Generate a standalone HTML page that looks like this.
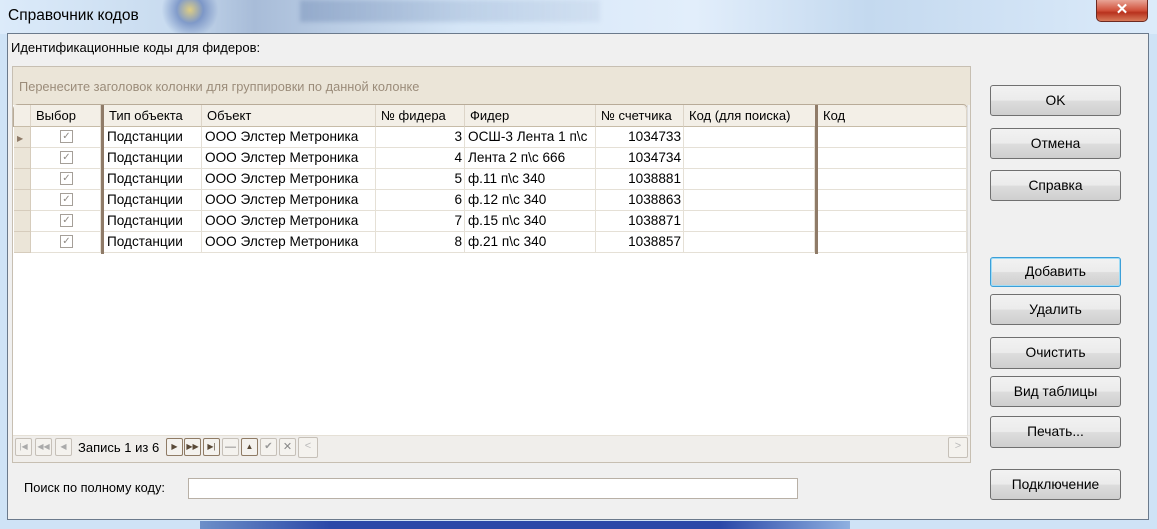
<!DOCTYPE html>
<html><head><meta charset="utf-8"><style>
*{box-sizing:border-box;margin:0;padding:0}
body{width:1157px;height:529px;overflow:hidden;position:relative;font-family:"Liberation Sans",sans-serif;font-size:12px;color:#000;background:#cfe3f6}
.a{position:absolute}
.title{left:0;top:0;width:1157px;height:34px;background:linear-gradient(90deg,#dcebfa 0%,#c8dbef 15%,#a8bcd8 22%,#d5e6f7 40%,#e2eefb 60%,#c4d9ef 75%,#dcebfa 100%)}
.client{left:7px;top:33px;width:1142px;height:487px;background:#f0f0f0;border:1px solid #6b7a8c}
.btn{position:absolute;left:990px;width:131px;border:1px solid #707070;border-radius:3px;background:linear-gradient(#f2f2f2 0%,#ebebeb 50%,#dddddd 51%,#cfcfcf 100%);text-align:center;font-size:13.8px}
.hd{position:absolute;top:105px;height:22px;line-height:21px;padding-left:5px;background:#f3efe7;border-right:1px solid #ddd5c8;border-bottom:1px solid #c7bca8;color:#000;font-size:13px}
.cell{position:absolute;height:21px;line-height:20px;border-right:1px solid #e5e0d6;border-bottom:1px solid #e5e0d6;padding:0 3px;font-size:13.6px;white-space:nowrap;overflow:hidden}
.r{text-align:right}
.cb{position:absolute;width:13px;height:13px;border:1px solid #a59f98;background:#fff}
.nb{position:absolute;top:438px;width:17px;height:18px;border:1px solid #c6c0b8;border-radius:2px;background:#f4f2ee;font-size:8px;line-height:16px;text-align:center;color:#aaa}
.nb.on{border-color:#8f7b65;color:#5a4a38}
</style></head><body>
<div class="a title"></div>
<div class="a" style="left:160px;top:0;width:60px;height:33px;background:radial-gradient(circle at 50% 30%,rgba(240,200,64,.6) 0,rgba(62,95,168,.5) 35%,rgba(200,220,240,0) 75%)"></div>
<div class="a" style="left:300px;top:0px;width:300px;height:22px;background:linear-gradient(90deg,rgba(80,110,160,.3),rgba(80,110,160,.08));filter:blur(2px)"></div>
<div class="a" style="left:8px;top:7px;font-size:15.5px;color:#000">Справочник кодов</div>
<div class="a" style="left:1096px;top:0;width:52px;height:22px;border:1px solid #6d2a22;border-top:none;border-radius:0 0 5px 5px;background:linear-gradient(#e8a496 0%,#d0503a 50%,#b8321e 60%,#d87a5a 100%);color:#fff;text-align:center;font-weight:bold;font-size:15px;line-height:20px">✕</div>
<div class="a client"></div>
<div class="a" style="left:11px;top:40px;font-size:13px">Идентификационные коды для фидеров:</div>
<div class="a" style="left:12px;top:66px;width:959px;height:397px;border:1px solid #c7bfb2;background:#fff"></div>
<div class="a" style="left:13px;top:67px;width:957px;height:38px;background:#ebe5d8"></div>
<div class="a" style="left:19px;top:79px;color:#9b8c7a;font-size:12.8px">Перенесите заголовок колонки для группировки по данной колонке</div>
<div class="a" style="left:13px;top:104px;width:955px;height:23px;border:1px solid #b8ab98;border-bottom:none;border-radius:5px 5px 0 0;background:#f3efe7"></div>
<div class="hd" style="left:14px;width:17px"></div>
<div class="hd" style="left:31px;width:70px">Выбор</div>
<div class="a" style="left:101px;top:105px;width:3px;height:149px;background:#8f7b68"></div>
<div class="hd" style="left:104px;width:98px">Тип объекта</div>
<div class="hd" style="left:202px;width:174px">Объект</div>
<div class="hd" style="left:376px;width:89px">№ фидера</div>
<div class="hd" style="left:465px;width:131px">Фидер</div>
<div class="hd" style="left:596px;width:88px">№ счетчика</div>
<div class="hd" style="left:684px;width:132px">Код (для поиска)</div>
<div class="a" style="left:815px;top:105px;width:3px;height:149px;background:#8f7b68"></div>
<div class="hd" style="left:818px;width:149px;border-radius:0 5px 0 0">Код</div>
<div id="rows"></div>
<script>
var d=[["3","ОСШ-3 Лента 1 п\\с","1034733"],["4","Лента 2 п\\с 666","1034734"],["5","ф.11 п\\с 340","1038881"],["6","ф.12 п\\с 340","1038863"],["7","ф.15 п\\с 340","1038871"],["8","ф.21 п\\с 340","1038857"]];
var h="";
d.forEach(function(r,i){var y=127+i*21;
h+='<div class="cell" style="left:14px;top:'+y+'px;width:17px;background:#ebe5d8;border-color:#d6ccbc">'+(i==0?'<span style="color:#8f7b68;font-size:8px">&#9654;</span>':'')+'</div>';
h+='<div class="cell" style="left:31px;top:'+y+'px;width:70px"></div><div class="cb" style="left:60px;top:'+(y+3)+'px;color:#8f8a84;font-size:10px;line-height:11px;text-align:center">✓</div>';
h+='<div class="cell" style="left:104px;top:'+y+'px;width:98px">Подстанции</div>';
h+='<div class="cell" style="left:202px;top:'+y+'px;width:174px">ООО Элстер Метроника</div>';
h+='<div class="cell r" style="left:376px;top:'+y+'px;width:89px;padding-right:2px">'+r[0]+'</div>';
h+='<div class="cell" style="left:465px;top:'+y+'px;width:131px;padding-left:3px">'+r[1]+'</div>';
h+='<div class="cell r" style="left:596px;top:'+y+'px;width:88px;padding-right:2px">'+r[2]+'</div>';
h+='<div class="cell" style="left:684px;top:'+y+'px;width:131px"></div>';
h+='<div class="cell" style="left:818px;top:'+y+'px;width:149px"></div>';
});
document.getElementById("rows").innerHTML=h;
</script>
<div class="a" style="left:967px;top:105px;width:3px;height:330px;background:#f0f0f0;border-left:1px solid #ddd"></div>
<div class="a" style="left:13px;top:435px;width:957px;height:27px;background:#f0eeeb;border-top:1px solid #e5e0d6"></div>
<div class="nb" style="left:15px">|◀</div>
<div class="nb" style="left:35px">◀◀</div>
<div class="nb" style="left:55px">◀</div>
<div class="a" style="left:78px;top:440px;font-size:13px">Запись 1 из 6</div>
<div class="nb on" style="left:166px">▶</div>
<div class="nb on" style="left:184px">▶▶</div>
<div class="nb on" style="left:203px">▶|</div>
<div class="nb" style="left:222px;color:#777;font-size:11px">—</div>
<div class="nb on" style="left:241px">▲</div>
<div class="nb" style="left:260px;color:#999;font-size:10px">✔</div>
<div class="nb" style="left:279px;color:#888;font-size:11px">✕</div>
<div class="nb" style="left:298px;width:20px;height:21px;top:437px;font-size:11px;color:#bbb">&lt;</div>
<div class="nb" style="left:948px;width:20px;height:21px;top:437px;font-size:11px;color:#bbb">&gt;</div>
<div class="a" style="left:24px;top:480px;font-size:12.8px">Поиск по полному коду:</div>
<div class="a" style="left:188px;top:478px;width:610px;height:21px;border:1px solid #b8b0a6;background:#fff"></div>
<div class="btn" style="top:85px;height:31px;line-height:29px">OK</div>
<div class="btn" style="top:128px;height:31px;line-height:29px">Отмена</div>
<div class="btn" style="top:170px;height:31px;line-height:29px">Справка</div>
<div class="btn" style="top:257px;height:30px;line-height:28px;border-color:#3c9fd8;box-shadow:inset 0 0 0 1px #9fdcf6">Добавить</div>
<div class="btn" style="top:294px;height:31px;line-height:29px">Удалить</div>
<div class="btn" style="top:337px;height:32px;line-height:30px">Очистить</div>
<div class="btn" style="top:376px;height:31px;line-height:29px">Вид таблицы</div>
<div class="btn" style="top:416px;height:32px;line-height:30px">Печать...</div>
<div class="btn" style="top:469px;height:31px;line-height:29px">Подключение</div>
<div class="a" style="left:200px;top:521px;width:650px;height:8px;background:linear-gradient(90deg,#6d8fc8,#2a48a8 20%,#2a48a8 80%,#8fb0e0)"></div>
</body></html>
